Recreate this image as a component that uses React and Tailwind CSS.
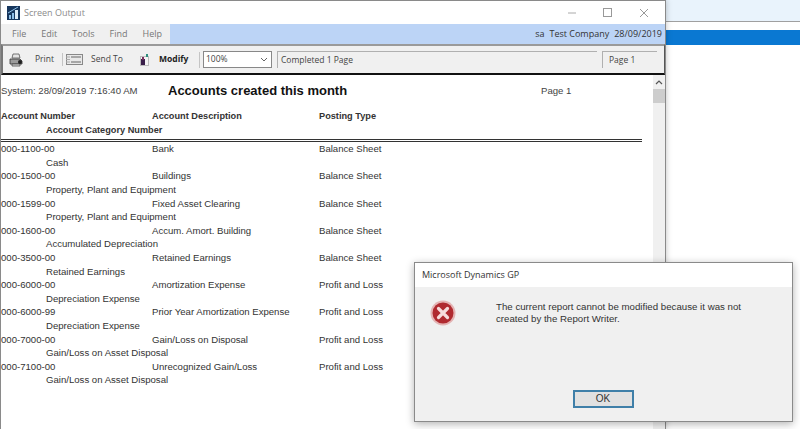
const rows = [
  ["000-1100-00", "Bank", "Balance Sheet", "Cash"],
  ["000-1500-00", "Buildings", "Balance Sheet", "Property, Plant and Equipment"],
  ["000-1599-00", "Fixed Asset Clearing", "Balance Sheet", "Property, Plant and Equipment"],
  ["000-1600-00", "Accum. Amort. Building", "Balance Sheet", "Accumulated Depreciation"],
  ["000-3500-00", "Retained Earnings", "Balance Sheet", "Retained Earnings"],
  ["000-6000-00", "Amortization Expense", "Profit and Loss", "Depreciation Expense"],
  ["000-6000-99", "Prior Year Amortization Expense", "Profit and Loss", "Depreciation Expense"],
  ["000-7000-00", "Gain/Loss on Disposal", "Profit and Loss", "Gain/Loss on Asset Disposal"],
  ["000-7100-00", "Unrecognized Gain/Loss", "Profit and Loss", "Gain/Loss on Asset Disposal"],
];

function AppIcon() {
  return (
    <svg width="13" height="14" viewBox="0 0 13 14" className="shrink-0">
      <rect width="13" height="14" fill="#17375e" />
      <rect x="2" y="9" width="2" height="4" fill="#8fc1e8" />
      <rect x="5" y="7" width="2" height="6" fill="#8fc1e8" />
      <rect x="8" y="4" width="3" height="9" fill="#dcecf8" />
      <path d="M1 7 L6 4 L11 1" stroke="#8fc1e8" strokeWidth="1" fill="none" />
    </svg>
  );
}

function PrinterIcon() {
  return (
    <svg width="14" height="14" viewBox="0 0 14 14" className="shrink-0">
      <path d="M4 1h6l1 4H3z" fill="#e4e4e4" stroke="#555" strokeWidth="0.8" />
      <path d="M1 6h10l2 2v3H1z" fill="#9a9a9a" stroke="#333" strokeWidth="0.8" />
      <path d="M3 11h8v2H3z" fill="#d8d8d8" stroke="#444" strokeWidth="0.8" />
      <circle cx="11" cy="9" r="2" fill="#1f1f1f" />
    </svg>
  );
}

function SendIcon() {
  return (
    <svg width="17" height="11" viewBox="0 0 17 11" className="shrink-0">
      <rect x="0.5" y="0.5" width="16" height="10" fill="#e8e8e8" stroke="#888" />
      <path d="M0 3h4M0 5.500h4M0 8h4" stroke="#aaa" />
      <path d="M5 3h10M5 8h10" stroke="#666" />
    </svg>
  );
}

function ModifyIcon() {
  return (
    <svg width="9" height="12" viewBox="0 0 9 12" className="shrink-0">
      <rect x="0.500" y="2.500" width="8" height="9" fill="#f4f4f4" stroke="#bbb" />
      <rect x="1" y="5" width="4" height="6" fill="#3a1f4a" />
      <rect x="2" y="3" width="2" height="3" fill="#7a2f5e" />
      <rect x="6" y="0" width="2" height="3" fill="#2f8f7f" />
    </svg>
  );
}

function ErrorIcon() {
  return (
    <svg width="26" height="26" viewBox="0 0 26 26" className="shrink-0">
      <circle cx="13" cy="13" r="12.500" fill="#e4b4b4" />
      <circle cx="13" cy="13" r="10.500" fill="#b02a30" />
      <path d="M8.500 8.500 L17.500 17.500 M17.500 8.500 L8.500 17.500" stroke="#f6dcdc" strokeWidth="3.200" strokeLinecap="round" />
    </svg>
  );
}

export default function App() {
  return (
    <div className="relative flex h-[429px] w-[800px] overflow-hidden bg-white font-['Liberation_Sans',Arial,sans-serif] text-[#333]">
      {/* Screen Output window */}
      <div className="z-10 flex h-full w-[666px] shrink-0 flex-col border-l border-r border-t border-[#8a8a8a] bg-white shadow-[0_0_6px_rgba(0,0,0,0.25)]">
        <div className="flex h-[23px] shrink-0 items-center pl-[6px]">
          <AppIcon />
          <span className="ml-[4px] font-['Open_Sans',sans-serif] text-[9px] text-[#8c8c8c]">Screen Output</span>
          <div className="ml-auto flex items-center text-[#9a9a9a]">
            <svg width="10" height="10" viewBox="0 0 10 10" className="mr-[26px]"><path d="M1 5h8" stroke="#aaa" /></svg>
            <svg width="10" height="10" viewBox="0 0 10 10" className="mr-[26px]"><rect x="0.500" y="0.500" width="8" height="8" fill="none" stroke="#999" /></svg>
            <svg width="10" height="10" viewBox="0 0 10 10" className="mr-[16px]"><path d="M1 1l8 8M9 1l-8 8" stroke="#999" /></svg>
          </div>
        </div>

        <div className="flex h-[20px] shrink-0 items-center bg-[#bcd4f6] font-['Open_Sans',sans-serif] text-[9px]">
          <div className="flex h-full w-[169px] items-center gap-[15px] bg-[#f0f0f0] pl-[11px] text-[#777]">
            <span>File</span>
            <span>Edit</span>
            <span>Tools</span>
            <span>Find</span>
            <span>Help</span>
          </div>
          <div className="ml-auto flex gap-[5px] pr-[3px] text-[#333]">
            <span>sa</span>
            <span>Test Company</span>
            <span>28/09/2019</span>
          </div>
        </div>

        <div className="flex h-[31px] shrink-0 items-center border-t-2 border-b-2 border-l-2 border-r border-t-[#9a9a9a] border-b-[#111] border-l-[#777] border-r-[#555] bg-[#f0f0f0] pl-[6px] font-['Open_Sans',sans-serif] text-[8.500px] text-[#444]">
          <PrinterIcon />
          <span className="ml-[12px] w-[24px]">Print</span>
          <div className="ml-[3px] h-[13px] w-px bg-[#c4c4c4]" />
          <div className="ml-[3px]"><SendIcon /></div>
          <span className="ml-[8px] w-[40px]">Send To</span>
          <div className="ml-[9px]"><ModifyIcon /></div>
          <span className="ml-[10px] w-[33px] font-bold text-[#222]">Modify</span>
          <div className="ml-[7px] h-[16px] w-px bg-[#c4c4c4]" />
          <div className="ml-[3px] flex h-[17px] w-[69px] items-center justify-between border border-[#888] bg-white pl-[2px] pr-[3px]">
            <span>100%</span>
            <svg width="8" height="5" viewBox="0 0 8 5"><path d="M1 1l3 3 3-3" stroke="#666" fill="none" /></svg>
          </div>
          <div className="ml-[5px] flex h-[17px] w-[320px] items-center border-l border-t border-[#b0b0b0] pl-[3px]">Completed 1 Page</div>
          <div className="ml-[5px] flex h-[17px] w-[55px] items-center border-l border-t border-[#b0b0b0] pl-[6px]">Page 1</div>
        </div>

        <div className="flex min-h-0 flex-1">
          <div className="min-w-0 flex-1 overflow-hidden pt-[9px] text-[9.600px] leading-[13.600px]">
            <div className="flex h-[14px] items-center">
              <span className="w-[167px] shrink-0 text-[#444]">System: 28/09/2019 7:16:40 AM</span>
              <span className="w-[373px] shrink-0 text-[13px] font-bold text-[#111]">Accounts created this month</span>
              <span className="text-[#444]">Page 1</span>
            </div>
            <div className="mt-[12px] grid grid-cols-[151px_167px_1fr] text-[9.200px] font-bold text-[#333]">
              <span>Account Number</span>
              <span>Account Description</span>
              <span>Posting Type</span>
              <span className="col-span-3 pl-[45px]">Account Category Number</span>
            </div>
            <div className="mt-[2px] h-[3px] w-[641px] border-y border-[#333]" />
            {rows.map((r) => (
              <div key={r[0]} className="grid grid-cols-[151px_167px_1fr]">
                <span>{r[0]}</span>
                <span>{r[1]}</span>
                <span>{r[2]}</span>
                <span className="col-span-3 pl-[45px]">{r[3]}</span>
              </div>
            ))}
          </div>
          <div className="flex w-[12px] shrink-0 flex-col items-center bg-[#f0f0f0]">
            <svg width="8" height="14" viewBox="0 0 8 14" className="shrink-0"><path d="M1 9l3-3 3 3" stroke="#555" strokeWidth="1.200" fill="none" /></svg>
            <div className="h-[14px] w-full bg-[#cdcdcd]" />
          </div>
        </div>
      </div>

      {/* Background application */}
      <div className="flex min-w-0 flex-1 flex-col">
        <div className="h-[22px] shrink-0 border-b border-[#a0a0a0] bg-[#e9f3fc]" />
        <div className="mt-[8px] h-[15px] shrink-0 bg-[#0a78d2]" />
      </div>

      {/* Error dialog */}
      <div className="absolute left-[414px] top-[262px] z-20 flex h-[160px] w-[379px] flex-col border border-[#8a8a8a] bg-[#f0f0f0] shadow-[0_2px_8px_rgba(0,0,0,0.3)]">
        <div className="flex h-[24px] shrink-0 items-center bg-white pl-[7px] font-['Open_Sans',sans-serif] text-[9px] text-[#333]">
          Microsoft Dynamics GP
        </div>
        <div className="flex flex-1 pl-[15px] pt-[13px]">
          <ErrorIcon />
          <p className="ml-[40px] mt-[1px] w-[270px] text-[9.700px] leading-[12px] text-[#333]">
            The current report cannot be modified because it was not created by the Report Writer.
          </p>
        </div>
        <div className="flex justify-center pb-[13px]">
          <button className="ml-[-1px] h-[18px] w-[61px] border-2 border-[#3f7fa8] bg-[#e1e1e1] text-[10px] leading-none text-[#333]">OK</button>
        </div>
      </div>
    </div>
  );
}
